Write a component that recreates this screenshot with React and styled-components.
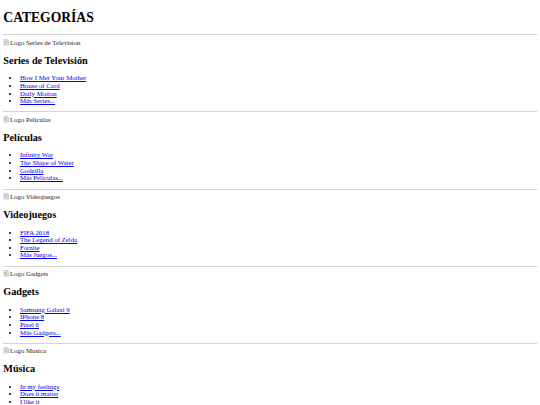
import React from 'react';
import styled, { createGlobalStyle } from 'styled-components';

// the reference is a default-styled page shot at a wider window, scaled down
const S = 0.415;
const F = 0.425;
const px = (n) => `${(n * S).toFixed(2)}px`;
const fs = (n) => `${(n * F).toFixed(2)}px`;

const GlobalStyle = createGlobalStyle`
  html, body {
    background: #fff;
  }
  body {
    margin: ${px(8)};
    font-family: "Liberation Serif", "Times New Roman", serif;
    font-size: ${fs(16)};
    line-height: ${px(18.4)};
    color: #000;
  }
`;

const Title = styled.h1`
  font-size: ${fs(32)};
  line-height: ${px(36.8)};
  font-weight: bold;
  margin: calc(${px(21.44)} - 2px) 0 ${px(21.44)};
`;

const Rule = styled.hr`
  margin: ${px(8)} 0;
  border: none;
  border-top: 1px solid #d4d4d4;
  height: 0;
`;

const Category = styled.section``;

const BrokenImage = styled.div`
  height: ${px(18.4)};
  color: #222;

  svg {
    width: ${px(16)};
    height: ${px(16)};
    vertical-align: -1px;
  }
`;

const Heading = styled.h2`
  font-size: ${fs(24)};
  line-height: ${px(27.6)};
  font-weight: bold;
  margin: ${px(19.92)} 0;
`;

const List = styled.ul`
  margin: ${px(16)} 0;
  padding-left: ${px(40)};
  list-style: disc;
`;

const Link = styled.a`
  color: #0000ee;
  text-decoration: underline;
`;

const categories = [
  {
    logo: 'Logo Series de Television',
    title: 'Series de Televisión',
    items: ['How I Met Your Mother', 'House of Card', 'Daily Motion', 'Más Series...'],
  },
  {
    logo: 'Logo Peliculas',
    title: 'Películas',
    items: ['Infinity War', 'The Shape of Water', 'Godzilla', 'Más Películas...'],
  },
  {
    logo: 'Logo Videojuegos',
    title: 'Videojuegos',
    items: ['FIFA 2018', 'The Legend of Zelda', 'Fornite', 'Más Juegos...'],
  },
  {
    logo: 'Logo Gadgets',
    title: 'Gadgets',
    items: ['Samsung Galaxi 9', 'IPhone 8', 'Pixel 6', 'Más Gadgets...'],
  },
  {
    logo: 'Logo Musica',
    title: 'Música',
    items: ['In my feelings', 'Does it matter', 'I like it', 'Más Música...'],
  },
];

// chrome's broken image glyph
const BrokenIcon = () => (
  <svg viewBox="0 0 16 16">
    <path d="M2.5 1.5h8l3 3v4l-2 1.5-2-1.5-2 1.5-2-1.5-3 2z" fill="#eef3f8" stroke="#8a8a8a" />
    <path d="M2.5 12l3-2 2 1.5 2-1.5 2 1.5 2-1.5v4.5h-11z" fill="#eef3f8" stroke="#8a8a8a" />
    <path d="M4 7l2-2 2 2" fill="none" stroke="#3c9a3c" strokeWidth="1.5" />
    <circle cx="10" cy="4.5" r="1.2" fill="#4a7fd6" />
  </svg>
);

const App = () => (
  <>
    <GlobalStyle />
    <Title>CATEGORÍAS</Title>
    <Rule />
    {categories.map((cat) => (
      <Category key={cat.title}>
        <BrokenImage>
          <BrokenIcon />
          {cat.logo}
        </BrokenImage>
        <Heading>{cat.title}</Heading>
        <List>
          {cat.items.map((item) => (
            <li key={item}>
              <Link href="#">{item}</Link>
            </li>
          ))}
        </List>
        <Rule />
      </Category>
    ))}
  </>
);

export default App;
